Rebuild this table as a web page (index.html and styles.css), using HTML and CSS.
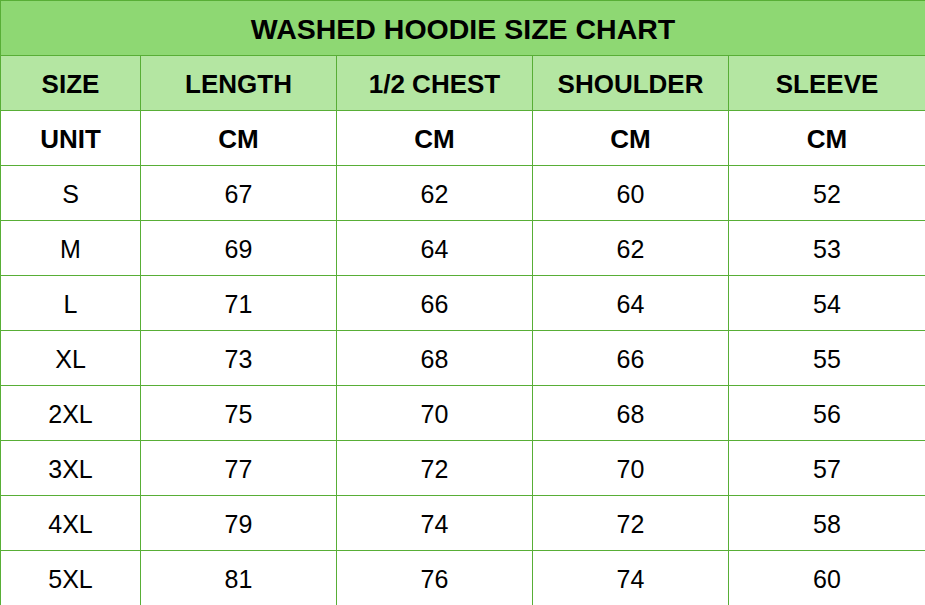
FILE: index.html
```html
<!DOCTYPE html>
<html>
<head>
<meta charset="utf-8">
<link rel="stylesheet" href="styles.css">
</head>
<body>
<table class="chart">
  <colgroup>
    <col class="c-size">
    <col class="c-wide">
    <col class="c-wide">
    <col class="c-wide">
    <col class="c-last">
  </colgroup>
  <thead>
    <tr class="title-row"><th colspan="5">WASHED HOODIE SIZE CHART</th></tr>
    <tr class="head-row"><th>SIZE</th><th>LENGTH</th><th>1/2 CHEST</th><th>SHOULDER</th><th>SLEEVE</th></tr>
  </thead>
  <tbody>
    <tr class="unit-row"><td>UNIT</td><td>CM</td><td>CM</td><td>CM</td><td>CM</td></tr>
    <tr><td>S</td><td>67</td><td>62</td><td>60</td><td>52</td></tr>
    <tr><td>M</td><td>69</td><td>64</td><td>62</td><td>53</td></tr>
    <tr><td>L</td><td>71</td><td>66</td><td>64</td><td>54</td></tr>
    <tr><td>XL</td><td>73</td><td>68</td><td>66</td><td>55</td></tr>
    <tr><td>2XL</td><td>75</td><td>70</td><td>68</td><td>56</td></tr>
    <tr><td>3XL</td><td>77</td><td>72</td><td>70</td><td>57</td></tr>
    <tr><td>4XL</td><td>79</td><td>74</td><td>72</td><td>58</td></tr>
    <tr><td>5XL</td><td>81</td><td>76</td><td>74</td><td>60</td></tr>
  </tbody>
</table>
</body>
</html>
```
FILE: styles.css
```css
html, body {
  margin: 0;
  padding: 0;
  background: #ffffff;
}
.chart {
  width: 925px;
  border-collapse: collapse;
  table-layout: fixed;
  font-family: "Liberation Sans", Arial, sans-serif;
  color: #000;
}
.c-size { width: 140px; }
.c-wide { width: 196px; }
.c-last { width: 197px; }
.chart th, .chart td {
  height: 52px;
  padding: 2px 0 0 0;
  border: 1px solid #58ae36;
  text-align: center;
  vertical-align: middle;
  font-size: 25px;
  font-weight: normal;
  line-height: 1;
}
.title-row th {
  background: #8ed873;
  font-size: 28.5px;
  font-weight: bold;
}
.head-row th {
  background: #b4e6a2;
  font-weight: bold;
  font-size: 26px;
}
.unit-row td {
  font-weight: bold;
  font-size: 26px;
}
```
